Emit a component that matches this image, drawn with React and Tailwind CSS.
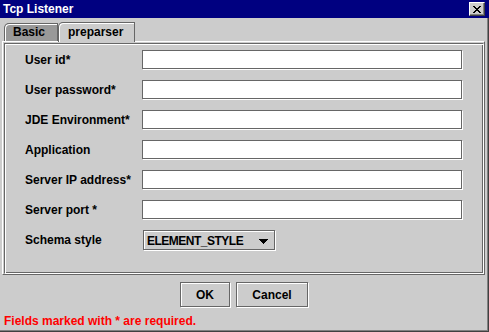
import React from "react";

const font = "font-['Liberation_Sans',Arial,Helvetica,sans-serif]";

const fields = [
  "User id*",
  "User password*",
  "JDE Environment*",
  "Application",
  "Server IP address*",
  "Server port *",
];

// pixel pattern of the classic close glyph
const xRows = [
  [0, 2, 6, 2],
  [1, 2, 5, 2],
  [2, 4],
  [3, 2],
  [2, 4],
  [1, 2, 5, 2],
  [0, 2, 6, 2],
];

const CloseButton = () => (
  <div className="w-[16px] h-[14px] bg-[#cccccc] border border-t-white border-l-white border-r-[#404040] border-b-[#404040] shadow-[inset_-1px_-1px_0_#808080] flex items-center justify-center">
    <svg width="8" height="7" viewBox="0 0 8 7" shapeRendering="crispEdges">
      {xRows.map((r, y) => (
        <g key={y}>
          <rect x={r[0]} y={y} width={r[1]} height="1" fill="#000" />
          {r.length > 2 && <rect x={r[2]} y={y} width={r[3]} height="1" fill="#000" />}
        </g>
      ))}
    </svg>
  </div>
);

const Field = () => (
  <div className="w-[320px] h-[19px] bg-white border border-[#666666] shadow-[1px_1px_0_#fff]" />
);

const Button = ({ children, w }) => (
  <div
    className={`${w} h-[25px] border border-[#666666] shadow-[1px_1px_0_#fff,inset_1px_1px_0_#fff] flex items-center justify-center pt-[1px] leading-[14px]`}
  >
    {children}
  </div>
);

export default function App() {
  return (
    <div className={`w-[489px] h-[332px] bg-[#cccccc] flex flex-col overflow-hidden ${font} text-[12px] font-bold text-black`}>
      {/* title bar */}
      <div className="h-[18px] shrink-0 bg-[#000080] flex items-center justify-between pl-[3px] pr-[4px]">
        <span className="text-white leading-[14px]">Tcp Listener</span>
        <CloseButton />
      </div>

      <div className="flex-1 flex flex-col border-r border-b border-[#404040]">
        <div className="flex-1 flex flex-col border-r border-b border-[#808080]">
          {/* tabs */}
          <div className="mt-[4px] h-[19px] flex items-end pl-[4px]">
            <div className="w-[54px] h-[18px] bg-[#999999] border-t border-l border-r border-[#666666] rounded-tl-[5px] shadow-[inset_1px_1px_0_#fff] pl-[8px] leading-[17px]">
              Basic
            </div>
            <div className="relative z-10 -mb-px ml-[0px] w-[77px] h-[20px] bg-[#cccccc] border-t border-l border-r border-[#666666] rounded-tl-[5px] shadow-[inset_1px_1px_0_#fff] pl-[9px] pt-[1px] leading-[17px]">
              preparser
            </div>
          </div>

          {/* tab content */}
          <div className="ml-[2px] w-[483px] h-[234px] border-t border-l border-t-white border-l-white border-r border-b border-r-[#666666] border-b-[#666666] pt-[1px] pl-[1px]">
            <div className="h-full border border-t-[#666666] border-l-[#666666] border-r-white border-b-white shadow-[inset_1px_1px_0_#fff,inset_-1px_-1px_0_#666666] pt-[6px] pl-[20px] flex flex-col gap-[11px]">
              {fields.map((label) => (
                <div key={label} className="flex items-center h-[19px]">
                  <span className="w-[117px] leading-[14px]">{label}</span>
                  <Field />
                </div>
              ))}
              <div className="flex items-center h-[20px]">
                <span className="w-[118px] leading-[14px]">Schema style</span>
                <div className="w-[132px] h-[20px] border border-[#666666] shadow-[1px_1px_0_#fff,inset_1px_1px_0_#fff] flex items-center justify-between pl-[3px] pr-[6px] pt-[2px]">
                  <span className="leading-[14px] tracking-[-0.5px]">ELEMENT_STYLE</span>
                  <svg width="9" height="5" viewBox="0 0 9 5" shapeRendering="crispEdges">
                    <polygon points="0,0 9,0 4.5,5" fill="#000" />
                  </svg>
                </div>
              </div>
            </div>
          </div>

          {/* buttons */}
          <div className="mt-[7px] flex justify-center gap-[6px] pl-[1px]">
            <Button w="w-[50px]">OK</Button>
            <Button w="w-[72px]">Cancel</Button>
          </div>

          <p className="mt-[7px] pl-[4px] leading-[14px] text-[#ff0000]">
            Fields marked with * are required.
          </p>
        </div>
      </div>
    </div>
  );
}
